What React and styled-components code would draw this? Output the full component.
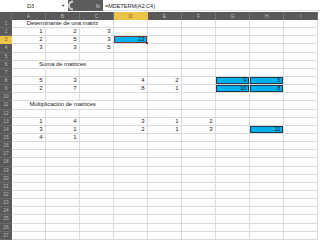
import React from 'react';
import styled, { createGlobalStyle } from 'styled-components';

const Global = createGlobalStyle`
  html, body { margin: 0; padding: 0; background: #ffffff; overflow: hidden; }
  body { width: 320px; height: 240px; font-family: "Liberation Sans", Arial, sans-serif; }
`;

const Page = styled.div`
  width: 320px;
  height: 240px;
  overflow: hidden;
  display: flex;
  flex-direction: column;
  background: #ffffff;
`;

const FormulaBar = styled.div`
  display: flex;
  height: 11px;
  flex: none;
  margin-bottom: 1px;
`;

const NameBox = styled.div`
  width: 68px;
  flex: none;
  background: #ffffff;
  display: flex;
  align-items: center;
  position: relative;
  font-size: 5.5px;
  color: #222;
  padding-left: 27px;
  box-sizing: border-box;
`;

const Caret = styled.span`
  position: absolute;
  right: 3px;
  top: 3px;
  font-size: 4px;
  color: #333;
`;

const Tools = styled.div`
  width: 35px;
  flex: none;
  background: #5c5c5c;
  display: flex;
  align-items: center;
  justify-content: space-between;
  padding-right: 3px;
  box-sizing: border-box;
`;

const Fx = styled.span`
  font-size: 5.5px;
  font-style: italic;
  color: #d6d6d6;
`;

const FormulaInput = styled.div`
  flex: 1;
  background: #ffffff;
  display: flex;
  align-items: center;
  padding-left: 2px;
  font-size: 5.5px;
  color: #222;
  border-top: 1px solid #ffffff;
  box-shadow: inset 0 -1px 0 #e2e2e2;
`;

const Sheet = styled.div`
  display: grid;
  grid-template-columns: 12px repeat(9, 34px);
  grid-template-rows: 8px;
  grid-auto-rows: 8.15px;
  flex: none;
`;

const Corner = styled.div`
  background: #595959;
  border-right: 1px solid #6e6e6e;
  box-sizing: border-box;
`;

const ColHeader = styled.div`
  background: ${p => (p.$active ? '#edc34a' : '#595959')};
  color: ${p => (p.$active ? '#7a5c10' : '#bdbdbd')};
  border-right: 1px solid ${p => (p.$active ? '#edc34a' : '#707070')};
  box-sizing: border-box;
  font-size: 5px;
  line-height: 8px;
  text-align: center;
`;

const RowHeader = styled.div`
  background: ${p => (p.$active ? '#edc34a' : '#595959')};
  color: ${p => (p.$active ? '#7a5c10' : '#bdbdbd')};
  border-bottom: 1px solid ${p => (p.$active ? '#edc34a' : '#6a6a6a')};
  box-sizing: border-box;
  font-size: 4.8px;
  line-height: 8px;
  text-align: center;
`;

const Cell = styled.div`
  grid-column: span ${p => p.$span || 1};
  position: relative;
  box-sizing: border-box;
  border-right: 1px solid #dadada;
  border-bottom: 1px solid #dadada;
  background: ${p => (p.$fill ? '#00b0f0' : '#ffffff')};
  box-shadow: ${p =>
    p.$active ? 'inset 0 0 0 1px #6e3b2c' : p.$fill ? 'inset 0 0 0 1px #1d3a48' : 'none'};
  font-size: 6px;
  letter-spacing: -0.1px;
  line-height: 7.5px;
  color: #1e1e1e;
  text-align: ${p => p.$align || 'right'};
  padding-right: ${p => (p.$align === 'center' ? '0' : '2.5px')};
  white-space: nowrap;
  overflow: visible;
`;

const Handle = styled.span`
  position: absolute;
  right: -1px;
  bottom: -1px;
  width: 2px;
  height: 2px;
  background: #6e3b2c;
`;

const COLS = ['A', 'B', 'C', 'D', 'E', 'F', 'G', 'H', 'I'];

const data = {
  1: { title: 'Determinante de una matriz' },
  2: { A: '1', B: '2', C: '3' },
  3: { A: '2', B: '5', C: '3', D: { v: '13', fill: true, active: true } },
  4: { A: '3', B: '3', C: '5' },
  6: { title: 'Suma de matrices' },
  8: { A: '5', B: '3', D: '4', E: '2', G: { v: '9', fill: true }, H: { v: '5', fill: true } },
  9: { A: '2', B: '7', D: '8', E: '1', G: { v: '10', fill: true }, H: { v: '8', fill: true } },
  11: { title: 'Multiplicación de matrices' },
  13: { A: '1', B: '4', D: '3', E: '1', F: '2' },
  14: { A: '3', B: '1', D: '2', E: '1', F: '3', H: { v: '11', fill: true } },
  15: { A: '4', B: '1' },
};

function SheetRow({ n }) {
  const row = data[n] || {};
  const cells = [];
  if (row.title) {
    cells.push(
      <Cell key="t" $span={3} $align="center">
        {row.title}
      </Cell>
    );
    COLS.slice(3).forEach(c => cells.push(<Cell key={c} />));
  } else {
    COLS.forEach(c => {
      const val = row[c];
      const obj = typeof val === 'object' ? val : { v: val };
      cells.push(
        <Cell key={c} $fill={obj.fill} $active={obj.active}>
          {obj.v}
          {obj.active && <Handle />}
        </Cell>
      );
    });
  }
  return (
    <>
      <RowHeader $active={n === 3}>{n}</RowHeader>
      {cells}
    </>
  );
}

export default function App() {
  const rows = Array.from({ length: 27 }, (_, i) => i + 1);
  return (
    <Page>
      <Global />
      <FormulaBar>
        <NameBox>
          D3
          <Caret>▼</Caret>
        </NameBox>
        <Tools>
          <svg width="8" height="11" viewBox="0 0 8 11">
            <path d="M5 1.5 A4 4 0 0 0 5 9.5" fill="none" stroke="#d0d0d0" strokeWidth="2" />
          </svg>
          <Fx>fx</Fx>
        </Tools>
        <FormulaInput>=MDETERM(A2:C4)</FormulaInput>
      </FormulaBar>
      <Sheet>
        <Corner />
        {COLS.map(c => (
          <ColHeader key={c} $active={c === 'D'}>
            {c}
          </ColHeader>
        ))}
        {rows.map(n => (
          <SheetRow key={n} n={n} />
        ))}
      </Sheet>
    </Page>
  );
}
